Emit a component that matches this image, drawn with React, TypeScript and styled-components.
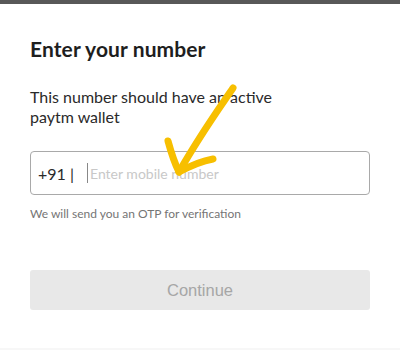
import styled, { createGlobalStyle } from 'styled-components'

const GlobalStyle = createGlobalStyle`
  html, body {
    margin: 0;
    padding: 0;
    background: #ffffff;
  }
  body {
    font-family: Lato, "Open Sans", sans-serif;
    -webkit-font-smoothing: antialiased;
  }
`

const Page = styled.div`
  width: 400px;
  height: 350px;
  display: flex;
  flex-flow: column;
  overflow: hidden;
  position: relative;
`

const Backdrop = styled.div`
  height: 4px;
  background: #585858;
  flex-shrink: 0;
`

const Sheet = styled.div`
  flex-grow: 1;
  display: flex;
  flex-flow: column;
  padding: 32px 30px 0;
  border-bottom: 2px solid #f7f7f7;
`

const Title = styled.h1`
  margin: 0;
  font-size: 21px;
  font-weight: 700;
  color: #1e1e1e;
  letter-spacing: 0.1px;
`

const Description = styled.p`
  margin: 26px 0 0;
  font-size: 16px;
  line-height: 20px;
  color: #2a2a2a;
  width: 250px;
`

const InputBox = styled.div`
  margin-top: 24px;
  height: 42px;
  border: 1px solid #a9a9a9;
  border-radius: 4px;
  display: flex;
  align-items: center;
  padding: 0 7px;
`

const Prefix = styled.span`
  font-size: 16px;
  color: #2a2a2a;
  width: 49px;
  flex-shrink: 0;
`

const Caret = styled.span`
  width: 1px;
  height: 20px;
  background: #888;
  margin-right: 2px;
`

const Placeholder = styled.span`
  font-size: 14px;
  color: #c8c8c8;
`

const Helper = styled.p`
  margin: 11px 0 0;
  font-size: 12px;
  color: #757575;
`

const ContinueButton = styled.button`
  margin-top: 49px;
  height: 40px;
  border: none;
  border-radius: 3px;
  background: #e8e8e8;
  color: #a6a6a6;
  font-family: "Liberation Sans", Arial, sans-serif;
  font-size: 16.5px;
  cursor: default;
`

const Scribble = styled.svg`
  position: absolute;
  left: 0;
  top: 0;
  pointer-events: none;
`

const App = () => (
  <>
    <GlobalStyle />
    <Page>
      <Backdrop />
      <Sheet>
        <Title>Enter your number</Title>
        <Description>This number should have an active paytm wallet</Description>
        <InputBox>
          <Prefix>+91 |</Prefix>
          <Caret />
          <Placeholder>Enter mobile number</Placeholder>
        </InputBox>
        <Helper>We will send you an OTP for verification</Helper>
        <ContinueButton>Continue</ContinueButton>
      </Sheet>
      <Scribble width="400" height="350" viewBox="0 0 400 350">
        <g fill="none" stroke="#f7bf00" strokeWidth="7" strokeLinecap="round" strokeLinejoin="round">
          <path d="M233 88 C218 110 200 135 179 172" />
          <path d="M168 141 C171 152 174 162 179 172 C190 166 202 161 213 159" />
        </g>
      </Scribble>
    </Page>
  </>
)

export default App
